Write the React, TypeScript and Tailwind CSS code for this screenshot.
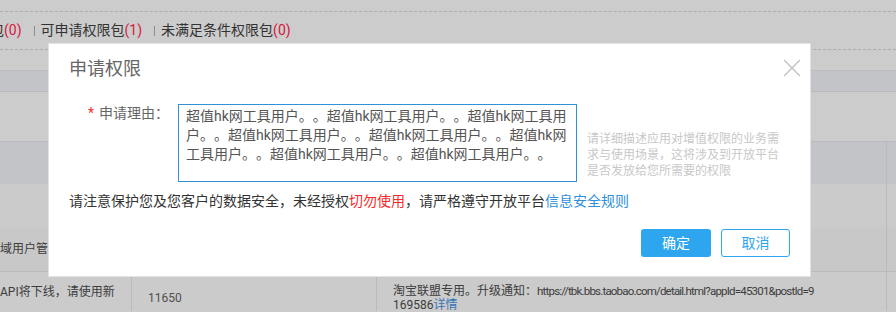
const reason = '超值hk网工具用户。。'.repeat(8);

function Count({ n }: { n: number }) {
    return <span className="text-[#d8163c]">({n})</span>;
}

function Pipe() {
    return <span className="mx-[6px] ml-[12px] inline-block h-[10px] w-px bg-[#8c8c8c]" />;
}

export default function App() {
    return (
        <div className="relative h-[312px] w-[896px] overflow-hidden bg-[#cccccc] font-['Roboto','Noto_Sans_CJK_SC',sans-serif] [text-spacing-trim:space-all]">
            {/* Page behind the mask */}
            <div className="flex flex-col">
                <div className="h-[11px]" />
                <div className="flex h-[38px] items-center border-t border-dashed border-[#adadad] text-[14px] text-[#333]">
                    <div className="ml-[-10px] flex items-center whitespace-nowrap">
                        <span>包<Count n={0} /></span>
                        <Pipe />
                        <span>可申请权限包<Count n={1} /></span>
                        <Pipe />
                        <span>未满足条件权限包<Count n={0} /></span>
                    </div>
                </div>
                <div className="h-[21px] border-t border-dashed border-[#adadad]" />
                <div className="h-[22px] border-y border-[#b9babd] bg-[#c3c4c7]" />
                <div className="h-[49px]" />

                {/* Table */}
                <div className="flex h-[43px] border-t border-[#b9babd] bg-[#c3c4c7]">
                    <div className="w-[886px]" />
                    <div className="flex-1 border-l border-[#b9babd]" />
                </div>
                <div className="flex h-[43px] bg-[#cbcbcb]">
                    <div className="w-[886px]" />
                    <div className="flex-1 border-l border-[#b9babd]" />
                </div>
                <div className="flex h-[44px] bg-[#c8c8c8] text-[12px] text-[#3c3c3c]">
                    <div className="flex w-[886px] items-center">
                        <span className="leading-[14px]">域用户管</span>
                    </div>
                    <div className="flex-1 border-l border-[#b9babd]" />
                </div>
                <div className="flex h-[40px] border-t border-[#b9babd] bg-[#cbcbcb] text-[12px] leading-[14px] text-[#3c3c3c]">
                    <div className="w-[131px] pt-[13px]">API将下线，请使用新</div>
                    <div className="w-[245px] border-l border-[#b9babd] pl-[16px] pt-[19px] text-[#505050]">11650</div>
                    <div className="w-[510px] border-l border-[#b9babd] pl-[16px] pt-[12px]">
                        淘宝联盟专用。升级通知：
                        <span className="text-[11.5px] tracking-[-0.8px]">https://tbk.bbs.taobao.com/detail.html?appId=45301&amp;postId=9</span>
                        <br />
                        169586<span className="text-[#3773b5]">详情</span>
                    </div>
                    <div className="flex-1 border-l border-[#b9babd]" />
                </div>
            </div>

            {/* Dialog */}
            <div className="absolute left-[48px] top-[43px] w-[763px] border border-[#e2e2e2] bg-white px-[20px] pb-[19px] pt-[13px]">
                <button className="absolute right-[9px] top-[15px]">
                    <svg width="18" height="18" viewBox="0 0 18 18" fill="none" stroke="#c2c2c2" strokeWidth="1.4">
                        <path d="M1 1 L17 17 M17 1 L1 17" />
                    </svg>
                </button>
                <h2 className="text-[18px] font-normal leading-[24px] text-[#666]">申请权限</h2>

                <div className="mt-[23px] flex items-start">
                    <label className="flex w-[109px] justify-end pr-[9px] text-[14px] leading-[19px] text-[#666]">
                        <span className="mr-[5px] text-[#f03030]">*</span>
                        申请理由：
                    </label>
                    <div className="h-[78px] w-[399px] border border-[#3091d8] px-[7px] pt-[2px] text-[14px] leading-[19px] text-[#555]">
                        {reason}
                    </div>
                    <p className="mb-[3px] ml-[10px] w-[196px] self-end text-[12px] leading-[16px] text-[#c8c8c8]">
                        请详细描述应用对增值权限的业务需求与使用场景，这将涉及到开放平台是否发放给您所需要的权限
                    </p>
                </div>

                <p className="mt-[9px] text-[14px] leading-[20px] text-[#333]">
                    请注意保护您及您客户的数据安全，未经授权<span className="text-[#f52a2a]">切勿使用</span>，请严格遵守开放平台
                    <a className="text-[#2e8fd8]">信息安全规则</a>
                </p>

                <div className="mt-[18px] flex justify-end gap-[10px]">
                    <button className="h-[28px] w-[70px] rounded-[3px] bg-[#2ea6ef] text-[14px] text-white">确定</button>
                    <button className="h-[28px] w-[69px] rounded-[3px] border border-[#2ea6ef] bg-white text-[14px] text-[#2ea6ef]">取消</button>
                </div>
            </div>
        </div>
    );
}
